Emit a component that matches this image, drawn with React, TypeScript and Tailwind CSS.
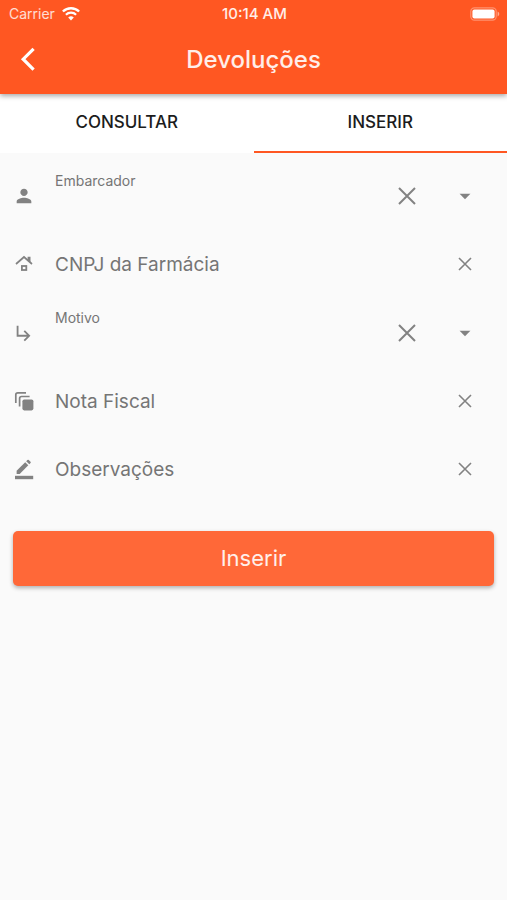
import type { ReactNode } from "react";
import {
  MdArrowDropDown,
  MdPerson,
  MdSubdirectoryArrowRight,
} from "react-icons/md";

function WifiIcon() {
  return (
    <svg width="18" height="14" viewBox="0 0 18 14" fill="none" stroke="currentColor" aria-hidden="true">
      <path d="M.9 4.5a11.6 11.6 0 0 1 16.2 0" strokeWidth="2.4" />
      <path d="M3.9 7.8a7.3 7.3 0 0 1 10.2 0" strokeWidth="2.2" />
      <path d="M9 13.4 6.2 10.6a4 4 0 0 1 5.6 0z" fill="currentColor" stroke="none" />
    </svg>
  );
}

function BatteryIcon() {
  return (
    <svg width="30" height="14" viewBox="0 0 30 14" aria-hidden="true">
      <rect x=".8" y=".8" width="25.4" height="12.4" rx="3.6" fill="none" stroke="white" strokeOpacity=".35" strokeWidth="1.2" />
      <rect x="2.4" y="2.4" width="22.2" height="9.2" rx="2" fill="white" />
      <path d="M27.6 4.6c2.2.7 2.2 4.1 0 4.8z" fill="white" fillOpacity=".5" />
    </svg>
  );
}

function BackIcon() {
  return (
    <svg width="16" height="26" viewBox="0 0 16 26" fill="none" stroke="currentColor" strokeWidth="3.2" aria-hidden="true">
      <path d="M13.6 1.8 3.2 12.2l10.4 10.4" />
    </svg>
  );
}

function HouseIcon() {
  return (
    <svg width="22" height="22" viewBox="0 0 22 22" fill="none" stroke="currentColor" aria-hidden="true">
      <path d="M3 11 11 4l8 7" strokeWidth="1.7" />
      <path d="M14.6 3.8h2.9v6.1l-2.9-2.6z" fill="currentColor" stroke="none" />
      <rect x="8.9" y="13" width="4.4" height="4" strokeWidth="1.8" />
    </svg>
  );
}

function StackIcon() {
  return (
    <svg width="22" height="22" viewBox="0 0 22 22" fill="none" stroke="currentColor" strokeWidth="1.7" aria-hidden="true">
      <path d="M2.8 13V4.8a2 2 0 0 1 2-2H13" />
      <path d="M6.6 16.6V8.5a2 2 0 0 1 2-2h8" />
      <rect x="9.4" y="9.4" width="11" height="11" rx="1.8" fill="currentColor" stroke="none" />
    </svg>
  );
}

function PencilIcon() {
  return (
    <svg width="22" height="22" viewBox="0 0 22 22" fill="currentColor" aria-hidden="true">
      <path d="M3.6 12.8 12.2 4.2l3.1 3.1-8.6 8.6H3.6z" />
      <path d="m13.2 3.2 1.2-1.2a1 1 0 0 1 1.4 0l1.7 1.7a1 1 0 0 1 0 1.4l-1.2 1.2z" />
      <path d="M2 17.8h18.2v3.4H2z" />
    </svg>
  );
}

function CloseIcon({ size }: { size: number }) {
  return (
    <svg width={size} height={size} viewBox={`0 0 ${size} ${size}`} fill="none" stroke="currentColor" strokeWidth={size > 16 ? 2 : 1.6} aria-hidden="true">
      <path d={`M1 1 ${size - 1} ${size - 1}M${size - 1} 1 1 ${size - 1}`} />
    </svg>
  );
}

type FieldProps = { id: string; label: string; icon: ReactNode };

function SelectField({ id, label, icon }: FieldProps) {
  return (
    <div className="flex h-[68px] items-center pr-6 pl-3 text-[#828282]">
      <span className="flex w-6 justify-center">{icon}</span>
      <div className="relative ml-[19px] flex h-full flex-1 items-center">
        <label htmlFor={id} className="flex-1 self-start pt-2 text-sm leading-[22px] text-[#757575]">
          {label}
        </label>
        <select id={id} className="absolute inset-0 w-full appearance-none bg-transparent outline-none" defaultValue="">
          <option value=""></option>
        </select>
        <button type="button" aria-label={`Limpar ${label}`} className="relative mr-[25px] flex h-10 w-10 items-center justify-center">
          <CloseIcon size={18} />
        </button>
        <MdArrowDropDown size={26} className="pointer-events-none relative mr-[5px]" aria-hidden="true" />
      </div>
    </div>
  );
}

function TextField({ id, label, icon }: FieldProps) {
  return (
    <div className="flex h-[68px] items-center pr-[25px] pl-3 text-[#828282]">
      <span className="flex w-6 justify-center">{icon}</span>
      <input
        id={id}
        type="text"
        aria-label={label}
        placeholder={label}
        className="ml-[19px] h-full min-w-0 flex-1 bg-transparent text-[19px] text-[#212121] outline-none placeholder:text-[#757575]"
      />
      <button type="button" aria-label={`Limpar ${label}`} className="flex h-10 w-[34px] items-center justify-center">
        <CloseIcon size={14} />
      </button>
    </div>
  );
}

export default function App() {
  return (
    <div className="min-h-screen bg-[#fafafa] font-['Inter',sans-serif] text-[#757575]">
      <header className="relative bg-[#ff5722] text-white shadow-[0_2px_5px_rgba(0,0,0,0.35)]">
        <div className="grid h-7 grid-cols-3 items-center pr-[7px] pl-[9px]">
          <div className="flex items-center gap-[7px] text-sm">
            <span className="text-white/80">Carrier</span>
            <WifiIcon />
          </div>
          <span className="text-center text-[15px] font-medium text-white/90">10:14 AM</span>
          <div className="flex justify-end">
            <BatteryIcon />
          </div>
        </div>
        <div className="grid grid-cols-[56px_1fr_56px] items-center pb-[2px]">
          <button type="button" aria-label="Voltar" className="flex h-16 items-center justify-center">
            <BackIcon />
          </button>
          <h1 className="text-center text-2xl font-medium text-white/90">Devoluções</h1>
        </div>
      </header>

      <nav className="grid grid-cols-2 bg-white text-[17px] font-medium text-[#1c1c1c]">
        <button type="button" className="h-[59px] border-b-2 border-transparent">
          CONSULTAR
        </button>
        <button type="button" aria-current="page" className="h-[59px] border-b-2 border-[#ff5722]">
          INSERIR
        </button>
      </nav>

      <form className="pt-[9px]">
        <SelectField id="embarcador" label="Embarcador" icon={<MdPerson size={22} />} />
        <TextField id="cnpj" label="CNPJ da Farmácia" icon={<HouseIcon />} />
        <div className="pt-px">
          <SelectField id="motivo" label="Motivo" icon={<MdSubdirectoryArrowRight size={22} />} />
        </div>
        <TextField id="nota" label="Nota Fiscal" icon={<StackIcon />} />
        <TextField id="observacoes" label="Observações" icon={<PencilIcon />} />
        <div className="px-[13px] pt-7">
          <button
            type="button"
            className="h-[55px] w-full rounded-[5px] bg-[#ff6838] text-[22px] text-white/90 shadow-[0_2px_4px_rgba(0,0,0,0.3)]"
          >
            Inserir
          </button>
        </div>
      </form>
    </div>
  );
}
